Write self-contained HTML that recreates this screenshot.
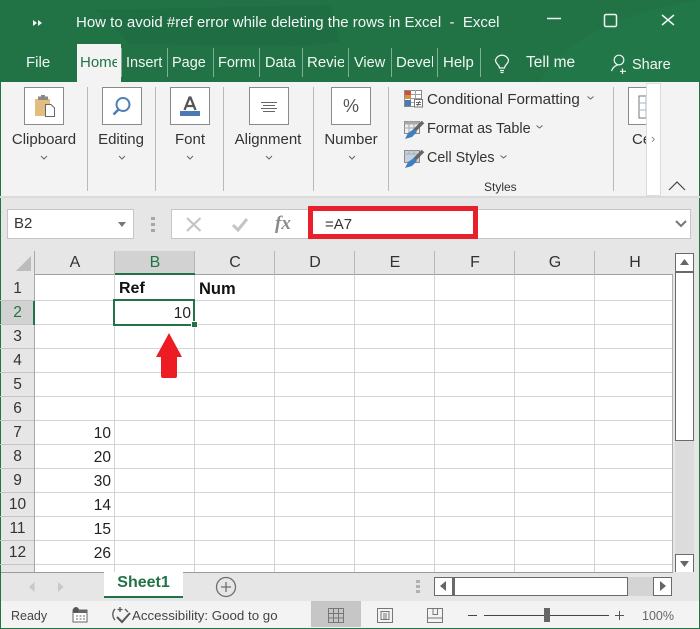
<!DOCTYPE html>
<html><head><meta charset="utf-8">
<style>
html,body{margin:0;padding:0;background:#fff}
#p{position:relative;width:700px;height:629px;overflow:hidden;background:#e6e6e6;font-family:"Liberation Sans",sans-serif;color:#262626}
#p div{position:absolute}
.t{white-space:nowrap;font-size:14.5px;line-height:18px;font-family:"Liberation Sans",sans-serif}
.w{color:#f2f7f4}
.sep{top:48px;width:1px;height:29px;background:#7fae97}
.box{width:38px;height:36px;top:87px;background:#fff;border:1px solid #8a8a8a}
.gs{top:87px;width:1px;height:104px;background:#b8b8b8}
.lab{top:130px;text-align:center;font-size:15px;line-height:20px;color:#333;white-space:nowrap}
.ch{top:253px;height:20px;line-height:20px;text-align:center;font-size:16px;color:#333;width:80px}
.rh{left:1px;width:33px;text-align:center;font-size:15.5px;line-height:24px;height:24px;color:#333}
.v{left:35px;width:76px;text-align:right;font-size:15.5px;line-height:24px;color:#222}
.gv{top:275px;width:1px;height:297px;background:#d4d4d4}
.gh{left:35px;width:637px;height:1px;background:#d4d4d4}
.rs{left:0;width:34px;height:1px;background:#c4c4c4}
svg{position:absolute}
</style></head><body>
<div id="p">
<!-- title bar -->
<div style="left:0;top:0;width:700px;height:82px;background:#217346"></div>
<svg style="left:0;top:0" width="700" height="82"><path d="M95 10 L330 5 L340 42 L300 46 L130 44 Z" fill="#1f6b42" opacity=".7"/><path d="M540 82 C570 30 640 10 700 0 L700 82 Z" fill="#23784a" opacity=".8"/><path d="M33 20l4 3-4 3zM38 20l4 3-4 3z" fill="#f2f7f4"/></svg>
<div class="t w" style="left:76px;top:14px;font-size:15px">How to avoid #ref error while deleting the rows in Excel&nbsp; -&nbsp; Excel</div>
<svg style="left:540px;top:8px" width="150" height="24" fill="none" stroke="#eef5f1" stroke-width="1.5"><path d="M7 10.500H21"/><rect x="64.500" y="6.500" width="12" height="12" rx="1.500"/><path d="M122 7L134 17M134 7L122 17"/></svg>
<!-- tabs -->
<div style="left:77px;top:44px;width:44px;height:38px;background:#f3f3f3"></div>
<div class="t w" style="left:26px;top:54px;font-size:15px">File</div>
<div class="t" style="left:80px;top:54px;width:37px;overflow:hidden;color:#217346;font-size:15px">Home</div>
<div class="t w" style="left:126px;top:54px;width:37px;overflow:hidden">Insert</div>
<div class="t w" style="left:172px;top:54px">Page</div>
<div class="t w" style="left:218px;top:54px;width:37px;overflow:hidden">Formulas</div>
<div class="t w" style="left:265px;top:54px">Data</div>
<div class="t w" style="left:307px;top:54px;width:37px;overflow:hidden;font-size:15px">Review</div>
<div class="t w" style="left:354px;top:54px">View</div>
<div class="t w" style="left:396px;top:54px;width:37px;overflow:hidden;font-size:15px">Developer</div>
<div class="t w" style="left:443px;top:54px;font-size:15px">Help</div>
<div class="sep" style="left:121px"></div><div class="sep" style="left:167px"></div><div class="sep" style="left:213px"></div><div class="sep" style="left:259px"></div><div class="sep" style="left:302px"></div><div class="sep" style="left:348px"></div><div class="sep" style="left:391px"></div><div class="sep" style="left:437px"></div><div class="sep" style="left:480px"></div>
<svg style="left:492px;top:52px" width="20" height="24" fill="none" stroke="#eef5f1" stroke-width="1.300"><path d="M7.500 16C7.500 13 3.500 12 3.500 8A6.800 6.800 0 0 1 16.500 8C16.500 12 12.500 13 12.500 16Z"/><path d="M8 18.500H12M8.500 20.500H11.500"/></svg>
<div class="t w" style="left:526px;top:54px;font-size:15.5px">Tell me</div>
<svg style="left:610px;top:54px" width="20" height="20" fill="none" stroke="#eef5f1" stroke-width="1.200"><circle cx="9" cy="6" r="4.800"/><path d="M1.500 17C2.500 14 4.500 12 7.500 11M12.500 14.500V20M10 17.300H16"/></svg>
<div class="t w" style="left:632px;top:56px">Share</div>
<!-- ribbon -->
<div style="left:1px;top:82px;width:698px;height:114px;background:#f3f3f3"></div>
<div style="left:0;top:82px;width:1px;height:547px;background:#217346"></div>
<div style="left:699px;top:82px;width:1px;height:547px;background:#217346"></div>
<div style="left:0;top:196px;width:700px;height:2px;background:#dadada"></div>
<div class="box" style="left:24px"></div><div class="box" style="left:102px"></div><div class="box" style="left:170px"></div><div class="box" style="left:249px"></div><div class="box" style="left:331px"></div><div class="box" style="left:628px;width:30px"></div>
<svg style="left:24px;top:87px" width="40" height="38"><rect x="11" y="12" width="15" height="17" fill="#e3bd7f"/><rect x="14" y="9.500" width="10" height="3.500" fill="#8a8a8a"/><rect x="17" y="8" width="4" height="2" fill="#8a8a8a"/><path d="M21.500 17.500H27L30.500 21V29.500H21.500Z" fill="#fff" stroke="#666"/></svg>
<svg style="left:102px;top:87px" width="40" height="38" fill="none" stroke="#4f7fb5" stroke-width="2"><circle cx="21" cy="17.500" r="6.500"/><path d="M16.500 22.500L11.500 27.500" stroke-width="2.600"/></svg>
<svg style="left:170px;top:87px" width="40" height="38"><path d="M14.500 23L19.500 10.500h1L25.500 23M16.500 19H23.500" fill="none" stroke="#555" stroke-width="2.300"/><rect x="10" y="24" width="20" height="5" fill="#4a7ab5"/></svg>
<svg style="left:249px;top:87px" width="40" height="38" stroke="#666" stroke-width="1"><path d="M12 15.500H28M14 18.500H26M12 21.500H28M14 24.500H26"/></svg>
<div class="t" style="left:331px;top:97px;width:40px;text-align:center;font-size:18px;color:#555">%</div>
<svg style="left:628px;top:87px" width="30" height="38"><rect x="11" y="9" width="15" height="22" fill="#fff" stroke="#777"/><path d="M11 16H26M11 23H26M18 9V31" stroke="#9bb5d2"/></svg>
<div class="lab" style="left:4px;width:80px">Clipboard</div>
<div class="lab" style="left:91px;width:60px">Editing</div>
<div class="lab" style="left:160px;width:60px">Font</div>
<div class="lab" style="left:228px;width:80px">Alignment</div>
<div class="lab" style="left:318px;width:66px">Number</div>
<div class="lab" style="left:632px;width:14px;overflow:hidden;text-align:left">Cells</div>
<div style="left:646px;top:83px;width:15px;height:113px;background:#fff;border:1px solid #dcdcdc;box-sizing:border-box"></div>
<div class="t" style="left:651px;top:130px;font-size:13px;color:#888">›</div>
<svg style="left:0;top:152px" width="400" height="12" fill="none" stroke="#666"><path d="M41 4l3 3 3-3M119 4l3 3 3-3M187 4l3 3 3-3M266 4l3 3 3-3M349 4l3 3 3-3"/></svg>
<div class="gs" style="left:87px"></div><div class="gs" style="left:155px"></div><div class="gs" style="left:223px"></div><div class="gs" style="left:313px"></div><div class="gs" style="left:388px"></div><div class="gs" style="left:613px"></div>
<svg style="left:403px;top:89px" width="22" height="20"><rect x="1.500" y="1.500" width="17" height="16" fill="#fff" stroke="#8a8a8a"/><path d="M1 5.500H18M1 9.500H18M1 13.500H18M7.500 1V17M12.500 1V17" stroke="#a0a0a0"/><rect x="2" y="2" width="6" height="4" fill="#c9503c"/><rect x="2" y="6" width="6" height="4" fill="#d9923c"/><rect x="2" y="11" width="6" height="6" fill="#4a7ab5"/><rect x="11.500" y="10.500" width="8" height="7.500" fill="#fff" stroke="#777"/><path d="M13 13.500H18M13 15.500H18M16.500 12L14.500 17" stroke="#444" stroke-width=".8" fill="none"/></svg>
<svg style="left:403px;top:120px" width="22" height="20"><rect x="1.500" y="1.500" width="15" height="12" fill="#eee" stroke="#8a8a8a"/><rect x="1.500" y="1.500" width="15" height="3" fill="#aaa"/><path d="M1 8H16M6 1V13M11 1V13" stroke="#aaa"/><path d="M20 2L11 11" stroke="#666" stroke-width="3.500"/><path d="M11 9L14 12L9 17L2 19L5 13Z" fill="#3f7fc0"/></svg>
<svg style="left:403px;top:149px" width="22" height="20"><rect x="1.500" y="1.500" width="15" height="12" fill="#c3d1e2" stroke="#8a8a8a"/><path d="M1 5H16M6 1V5M11 1V5" stroke="#aaa"/><path d="M20 2L11 11" stroke="#666" stroke-width="3.500"/><path d="M11 9L14 12L9 17L2 19L5 13Z" fill="#3f7fc0"/></svg>
<div class="t" style="left:427px;top:91px;font-size:15.200px;color:#333">Conditional Formatting</div>
<div class="t" style="left:427px;top:120px;color:#333">Format as Table</div>
<div class="t" style="left:427px;top:149px;color:#333;font-size:14.300px">Cell Styles</div>
<svg style="left:582px;top:90px" width="14" height="14" fill="none" stroke="#666"><path d="M5.500 6.500l3 2.500 3-2.500"/></svg>
<svg style="left:531px;top:119px" width="14" height="14" fill="none" stroke="#666"><path d="M5.500 6.500l3 2.500 3-2.500"/></svg>
<svg style="left:495px;top:149px" width="14" height="14" fill="none" stroke="#666"><path d="M5.500 6.500l3 2.500 3-2.500"/></svg>
<div class="t" style="left:484px;top:178px;font-size:12px;color:#333">Styles</div>
<svg style="left:666px;top:178px" width="22" height="14" fill="none" stroke="#444" stroke-width="1.200"><path d="M3 12L11 4L19 12"/></svg>
<!-- formula bar -->
<div style="left:7px;top:209px;width:127px;height:30px;background:#fff;border:1px solid #c6c6c6;box-sizing:border-box"></div>
<div class="t" style="left:14px;top:215px;color:#333;font-size:15px">B2</div>
<svg style="left:117px;top:221px" width="10" height="8"><path d="M1 1H9L5 6Z" fill="#777"/></svg>
<div style="left:151px;top:217px;width:4px;height:3px;background:#a6a6a6"></div><div style="left:151px;top:223px;width:4px;height:3px;background:#a6a6a6"></div><div style="left:151px;top:229px;width:4px;height:3px;background:#a6a6a6"></div>
<div style="left:171px;top:209px;width:520px;height:30px;background:#fff;border:1px solid #c6c6c6;box-sizing:border-box"></div>
<svg style="left:185px;top:216px" width="18" height="17" stroke="#c4c4c4" stroke-width="2.200" fill="none"><path d="M2 2L15.500 15M15.500 2L2 15"/></svg>
<svg style="left:230px;top:216px" width="20" height="18" stroke="#c4c4c4" stroke-width="3" fill="none"><path d="M3 9L8 14L17 3"/></svg>
<div style="left:275px;top:212px;font-family:'Liberation Serif',serif;font-style:italic;font-weight:bold;font-size:19px;line-height:24px;color:#8a8a8a;white-space:nowrap">fx</div>
<div style="left:308px;top:206px;width:170px;height:33px;border:5px solid #e8202c;box-sizing:border-box"></div>
<div class="t" style="left:325px;top:216px;font-size:15px;color:#333">=A7</div>
<svg style="left:674px;top:218px" width="14" height="12" fill="none" stroke="#777" stroke-width="2"><path d="M2 3L7 8L12 3"/></svg>
<!-- sheet -->
<div style="left:35px;top:275px;width:637px;height:297px;background:#fff"></div>
<div style="left:1px;top:251px;width:672px;height:24px;background:#e6e6e6"></div>
<div style="left:115px;top:251px;width:80px;height:23px;background:#d2d2d2"></div>
<div style="left:1px;top:275px;width:33px;height:297px;background:#e6e6e6"></div>
<div style="left:1px;top:301px;width:33px;height:24px;background:#d2d2d2"></div>
<div style="left:34px;top:251px;width:1px;height:321px;background:#a8a8a8"></div>
<div style="left:35px;top:274px;width:638px;height:1px;background:#a0a0a0"></div>
<div style="left:672px;top:275px;width:1px;height:297px;background:#b0b0b0"></div>
<svg style="left:15px;top:255px" width="18" height="18"><path d="M16 1V16H1Z" fill="#bcbcbc"/></svg>
<div class="gv" style="left:114px"></div><div class="gv" style="left:194px"></div><div class="gv" style="left:274px"></div><div class="gv" style="left:354px"></div><div class="gv" style="left:434px"></div><div class="gv" style="left:514px"></div><div class="gv" style="left:594px"></div>
<div style="left:114px;top:251px;width:1px;height:24px;background:#b8b8b8"></div><div style="left:194px;top:251px;width:1px;height:24px;background:#b8b8b8"></div><div style="left:274px;top:251px;width:1px;height:24px;background:#b8b8b8"></div><div style="left:354px;top:251px;width:1px;height:24px;background:#b8b8b8"></div><div style="left:434px;top:251px;width:1px;height:24px;background:#b8b8b8"></div><div style="left:514px;top:251px;width:1px;height:24px;background:#b8b8b8"></div><div style="left:594px;top:251px;width:1px;height:24px;background:#b8b8b8"></div>
<div class="gh" style="top:300px"></div><div class="gh" style="top:324px"></div><div class="gh" style="top:348px"></div><div class="gh" style="top:372px"></div><div class="gh" style="top:396px"></div><div class="gh" style="top:420px"></div><div class="gh" style="top:444px"></div><div class="gh" style="top:468px"></div><div class="gh" style="top:492px"></div><div class="gh" style="top:516px"></div><div class="gh" style="top:540px"></div><div class="gh" style="top:564px"></div>
<div class="rs" style="top:300px"></div><div class="rs" style="top:324px"></div><div class="rs" style="top:348px"></div><div class="rs" style="top:372px"></div><div class="rs" style="top:396px"></div><div class="rs" style="top:420px"></div><div class="rs" style="top:444px"></div><div class="rs" style="top:468px"></div><div class="rs" style="top:492px"></div><div class="rs" style="top:516px"></div><div class="rs" style="top:540px"></div><div class="rs" style="top:564px"></div>
<div class="ch" style="left:35px">A</div><div class="ch" style="left:115px;color:#217346;border-bottom:2px solid #217346">B</div><div class="ch" style="left:195px">C</div><div class="ch" style="left:275px">D</div><div class="ch" style="left:355px">E</div><div class="ch" style="left:435px">F</div><div class="ch" style="left:515px">G</div><div class="ch" style="left:595px">H</div>
<div class="rh" style="top:277px">1</div><div class="rh" style="top:301px;color:#217346">2</div><div class="rh" style="top:325px">3</div><div class="rh" style="top:349px">4</div><div class="rh" style="top:373px">5</div><div class="rh" style="top:397px">6</div><div class="rh" style="top:421px">7</div><div class="rh" style="top:445px">8</div><div class="rh" style="top:469px">9</div><div class="rh" style="top:493px">10</div><div class="rh" style="top:517px">11</div><div class="rh" style="top:541px">12</div>
<div style="left:33px;top:301px;width:2px;height:24px;background:#217346"></div>
<div class="v" style="top:422px">10</div><div class="v" style="top:446px">20</div><div class="v" style="top:470px">30</div><div class="v" style="top:494px">14</div><div class="v" style="top:518px">15</div><div class="v" style="top:542px">26</div>
<div class="t" style="left:119px;top:280px;font-weight:bold;font-size:16px;color:#111">Ref</div>
<div class="t" style="left:199px;top:280px;font-weight:bold;font-size:16.500px;color:#111">Num</div>
<div style="left:113px;top:299px;width:82px;height:27px;border:2px solid #217346;box-sizing:border-box"></div>
<div style="left:191px;top:321px;width:5px;height:5px;background:#217346;border:1px solid #fff"></div>
<div class="v" style="left:115px;width:76px;top:302px">10</div>
<svg style="left:155px;top:332px" width="28" height="47"><path d="M14 1L27 25H22V44Q22 46 20 46H8Q6 46 6 44V25H1Z" fill="#ed1c24"/></svg>
<!-- scrollbar -->
<div style="left:675px;top:253px;width:19px;height:319px;background:#dcdcdc"></div>
<div style="left:675px;top:253px;width:19px;height:19px;background:#fff;border:1px solid #6a6a6a;box-sizing:border-box"></div>
<svg style="left:680px;top:259px" width="10" height="6"><path d="M0 6H9L4.500 0Z" fill="#666"/></svg>
<div style="left:675px;top:272px;width:19px;height:169px;background:#fff;border:1px solid #6a6a6a;box-sizing:border-box"></div>
<div style="left:675px;top:554px;width:19px;height:19px;background:#fff;border:1px solid #6a6a6a;box-sizing:border-box"></div>
<svg style="left:680px;top:561px" width="10" height="6"><path d="M0 0H9L4.500 6Z" fill="#666"/></svg>
<!-- sheet tabs -->
<div style="left:1px;top:572px;width:698px;height:29px;background:#e6e6e6"></div>
<div style="left:1px;top:572px;width:672px;height:1px;background:#9a9a9a"></div>
<div style="left:104px;top:572px;width:79px;height:24px;background:#fff;border-bottom:2px solid #217346"></div>
<div class="t" style="left:104px;top:574px;width:79px;text-align:center;font-weight:bold;font-size:16px;color:#217346">Sheet1</div>
<svg style="left:26px;top:580px" width="40" height="14"><path d="M8.500 2L3 7L8.500 12Z" fill="#c8c8c8"/><path d="M32 2L37.500 7L32 12Z" fill="#c8c8c8"/></svg>
<svg style="left:215px;top:576px" width="22" height="22" fill="none" stroke="#6e6e6e" stroke-width="1.300"><circle cx="11" cy="11" r="9.500"/><path d="M11 6V16M6 11H16"/></svg>
<div style="left:416px;top:580px;width:4px;height:3px;background:#b0b0b0"></div><div style="left:416px;top:585px;width:4px;height:3px;background:#b0b0b0"></div><div style="left:416px;top:590px;width:4px;height:3px;background:#b0b0b0"></div>
<div style="left:434px;top:577px;width:19px;height:19px;background:#fff;border:1px solid #6a6a6a;box-sizing:border-box"></div>
<svg style="left:439px;top:581px" width="8" height="11"><path d="M7 0V10L1 5Z" fill="#666"/></svg>
<div style="left:453px;top:577px;width:175px;height:19px;background:#fff;border:1px solid #6a6a6a;border-left:2px solid #6a6a6a;box-sizing:border-box"></div>
<div style="left:628px;top:577px;width:26px;height:19px;background:#d4d4d4"></div>
<div style="left:653px;top:577px;width:19px;height:19px;background:#fff;border:1px solid #6a6a6a;box-sizing:border-box"></div>
<svg style="left:659px;top:581px" width="8" height="11"><path d="M1 0V10L7 5Z" fill="#666"/></svg>
<!-- status bar -->
<div style="left:1px;top:601px;width:698px;height:27px;background:#f3f3f3"></div>
<div style="left:0;top:627.500px;width:700px;height:2px;background:#217346"></div>
<div style="left:311px;top:601px;width:50px;height:26px;background:#c6c6c6"></div>
<div class="t" style="left:11px;top:607px;font-size:12.500px;color:#444">Ready</div>
<svg style="left:72px;top:607px" width="16" height="16"><rect x="1" y="3" width="14" height="12" fill="#fff" stroke="#666"/><rect x="1" y="3" width="14" height="3" fill="#666"/><circle cx="4" cy="3" r="3" fill="#555"/><path d="M4 9h2M7.500 9h2M11 9h2M4 12h2M7.500 12h2M11 12h2" stroke="#666"/></svg>
<svg style="left:110px;top:606px" width="22" height="20" fill="none" stroke="#555" stroke-width="1.300"><path d="M5 3A8 8 0 0 0 5 14M10 1V6M7.500 3.500H12.500M15 3L18 6"/><path d="M7 11L12 16L20 7" stroke-width="2"/></svg>
<div class="t" style="left:132px;top:607px;font-size:13.300px;color:#444">Accessibility: Good to go</div>
<svg style="left:327px;top:607px" width="18" height="17" fill="none" stroke="#777"><path d="M1.500 1.500H16.500V15.500H1.500ZM1.500 6.500H16.500M1.500 11H16.500M6.500 1.500V15.500M11.500 1.500V15.500"/></svg>
<svg style="left:376px;top:607px" width="18" height="17" fill="none" stroke="#777"><path d="M1.500 1.500H16.500V15.500H1.500Z"/><path d="M5 4.500H13V12.500H5ZM7 7H11M7 9H11M7 11H11"/></svg>
<svg style="left:426px;top:607px" width="18" height="17" fill="none" stroke="#777"><path d="M1.500 1.500H16.500V15.500H1.500ZM1.500 11H16.500M7 1.500V7.500H11.500V1.500"/></svg>
<div style="left:468px;top:615px;width:9px;height:1px;background:#444"></div>
<div style="left:484px;top:615px;width:125px;height:1px;background:#444"></div>
<div style="left:544px;top:608px;width:6px;height:14px;background:#666"></div>
<svg style="left:615px;top:610px" width="10" height="11" stroke="#555"><path d="M0 5.500H9M4.500 1V10"/></svg>
<div class="t" style="left:642px;top:607px;font-size:12.500px;color:#666">100%</div>
</div>
</body></html>
